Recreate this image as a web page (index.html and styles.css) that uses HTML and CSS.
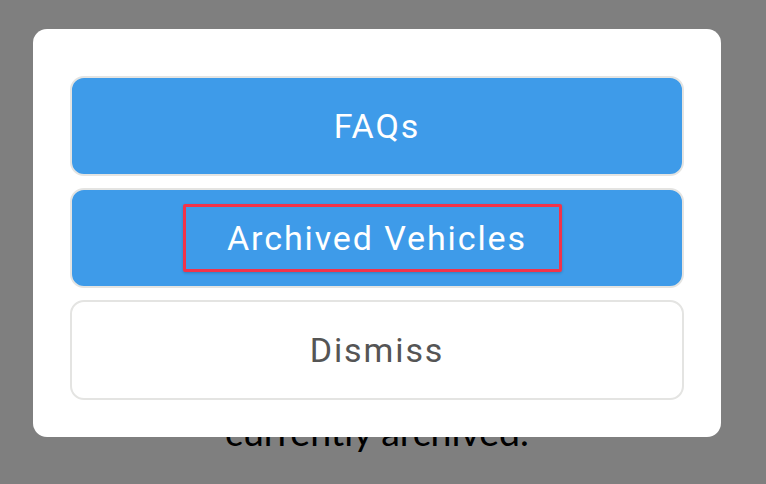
FILE: index.html
```html
<!DOCTYPE html>
<html lang="en">
<head>
    <meta charset="UTF-8">
    <meta name="viewport" content="width=device-width, initial-scale=1.0">
    <title>Vehicles</title>
    <link rel="stylesheet" href="styles.css">
</head>
<body>
    <div class="page">
        <p class="empty-text">currently archived.</p>
    </div>

    <div class="overlay">
        <div class="sheet">
            <button class="sheet-btn primary">FAQs</button>
            <button class="sheet-btn primary"><span class="highlight">Archived Vehicles</span></button>
            <button class="sheet-btn plain">Dismiss</button>
        </div>
    </div>
</body>
</html>
```

FILE: styles.css
```css
body {
    margin: 0;
    padding: 0;
    width: 766px;
    height: 484px;
    overflow: hidden;
    background-color: #ffffff;
    font-family: Roboto, "Liberation Sans", sans-serif;
}
.page {
    padding-top: 408px;
    padding-right: 12px;
    text-align: center;
}
.empty-text {
    margin: 0;
    font-family: Lato, "DejaVu Sans", sans-serif;
    font-size: 37.5px;
    line-height: 48px;
    color: #000;
}
.overlay {
    position: absolute;
    top: 0;
    left: 0;
    right: 0;
    bottom: 0;
    background: rgba(0, 0, 0, 0.5);
}
.sheet {
    position: absolute;
    top: 29px;
    left: 33px;
    width: 688px;
    box-sizing: border-box;
    padding: 47px 37px 37px;
    background: #fff;
    border-radius: 14px;
    display: flex;
    flex-direction: column;
    gap: 12px;
}
.sheet-btn {
    height: 100px;
    border: 2px solid #e4e4e2;
    border-radius: 14px;
    font-family: Roboto, "Liberation Sans", sans-serif;
    font-size: 34px;
    letter-spacing: 1.9px;
    display: flex;
    justify-content: center;
    align-items: center;
    padding: 0;
}
.primary {
    background-color: #3e9be9;
    color: #fff;
}
.plain {
    background-color: #fff;
    color: #555;
}
.highlight {
    box-sizing: border-box;
    height: 68px;
    padding: 0 32px 0 41px;
    margin-right: 9px;
    display: flex;
    align-items: center;
    border: 3px solid #f2334a;
    border-radius: 2px;
    box-shadow: 0 1px 3px rgba(0, 0, 0, 0.2);
}
```
